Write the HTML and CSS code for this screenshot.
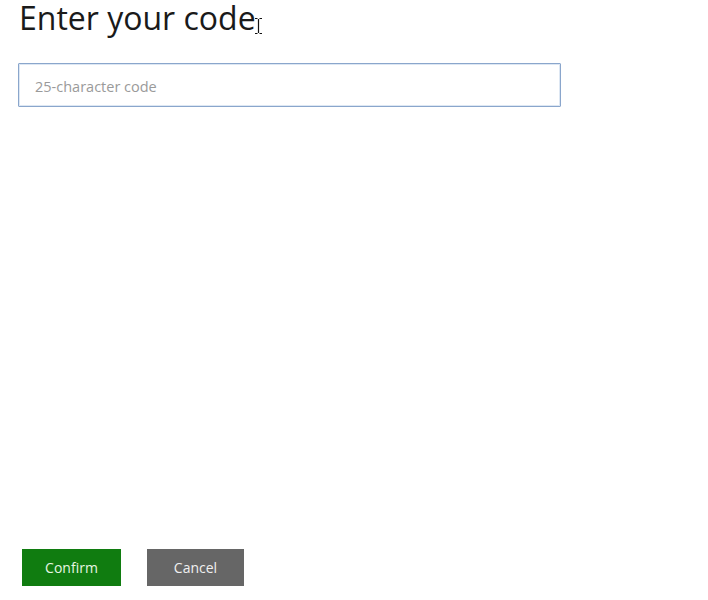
FILE: index.html
```html
<!DOCTYPE html>
<html>
<head>
<meta charset="utf-8">
<link rel="stylesheet" href="styles.css">
</head>
<body>
<div class="page">
  <h1 class="title">Enter your code</h1>
  <input class="code-input" type="text" placeholder="25-character code">
  <div class="spacer"></div>
  <div class="actions">
    <button class="btn btn-confirm">Confirm</button>
    <button class="btn btn-cancel">Cancel</button>
  </div>
  <svg class="cursor" width="9" height="18" viewBox="0 0 9 18">
    <path d="M1 1.5h2.5M5.5 1.5H8M4.5 2v14M1 16.5h2.5M5.5 16.5H8" stroke="#111" stroke-width="1.2" fill="none"/>
  </svg>
</div>
</body>
</html>
```

FILE: styles.css
```css
html, body {
  margin: 0;
  padding: 0;
  background: #ffffff;
}
.page {
  position: relative;
  width: 708px;
  height: 600px;
  display: flex;
  flex-direction: column;
  font-family: "Open Sans", "Noto Sans", sans-serif;
}
.title {
  margin: 0;
  padding: 2px 0 0 19px;
  font-size: 32px;
  font-weight: 400;
  line-height: 32px;
  color: #1a1a1a;
  letter-spacing: 0;
}
.code-input {
  margin: 29px 0 0 18px;
  width: 543px;
  height: 44px;
  box-sizing: border-box;
  border: 1px solid #8aa6cc;
  border-radius: 1px;
  box-shadow: inset 0 0 0 1px #dde7f3;
  padding: 2px 0 0 16px;
  font-family: "Open Sans", "Noto Sans", sans-serif;
  font-size: 14.5px;
  color: #333;
  outline: none;
}
.code-input::placeholder {
  color: #9a9a9a;
}
.spacer {
  flex: 1;
}
.actions {
  display: flex;
  gap: 26px;
  padding: 0 0 14px 22px;
}
.btn {
  height: 37px;
  border: none;
  border-radius: 0;
  font-family: "Open Sans", "Noto Sans", sans-serif;
  font-size: 14px;
  padding: 0;
  cursor: pointer;
}
.btn-confirm {
  width: 99px;
  background: #107c10;
  color: #e6f6e2;
}
.btn-cancel {
  width: 97px;
  background: #666666;
  color: #f0f0f0;
}
.cursor {
  position: absolute;
  left: 254px;
  top: 17px;
}
```
